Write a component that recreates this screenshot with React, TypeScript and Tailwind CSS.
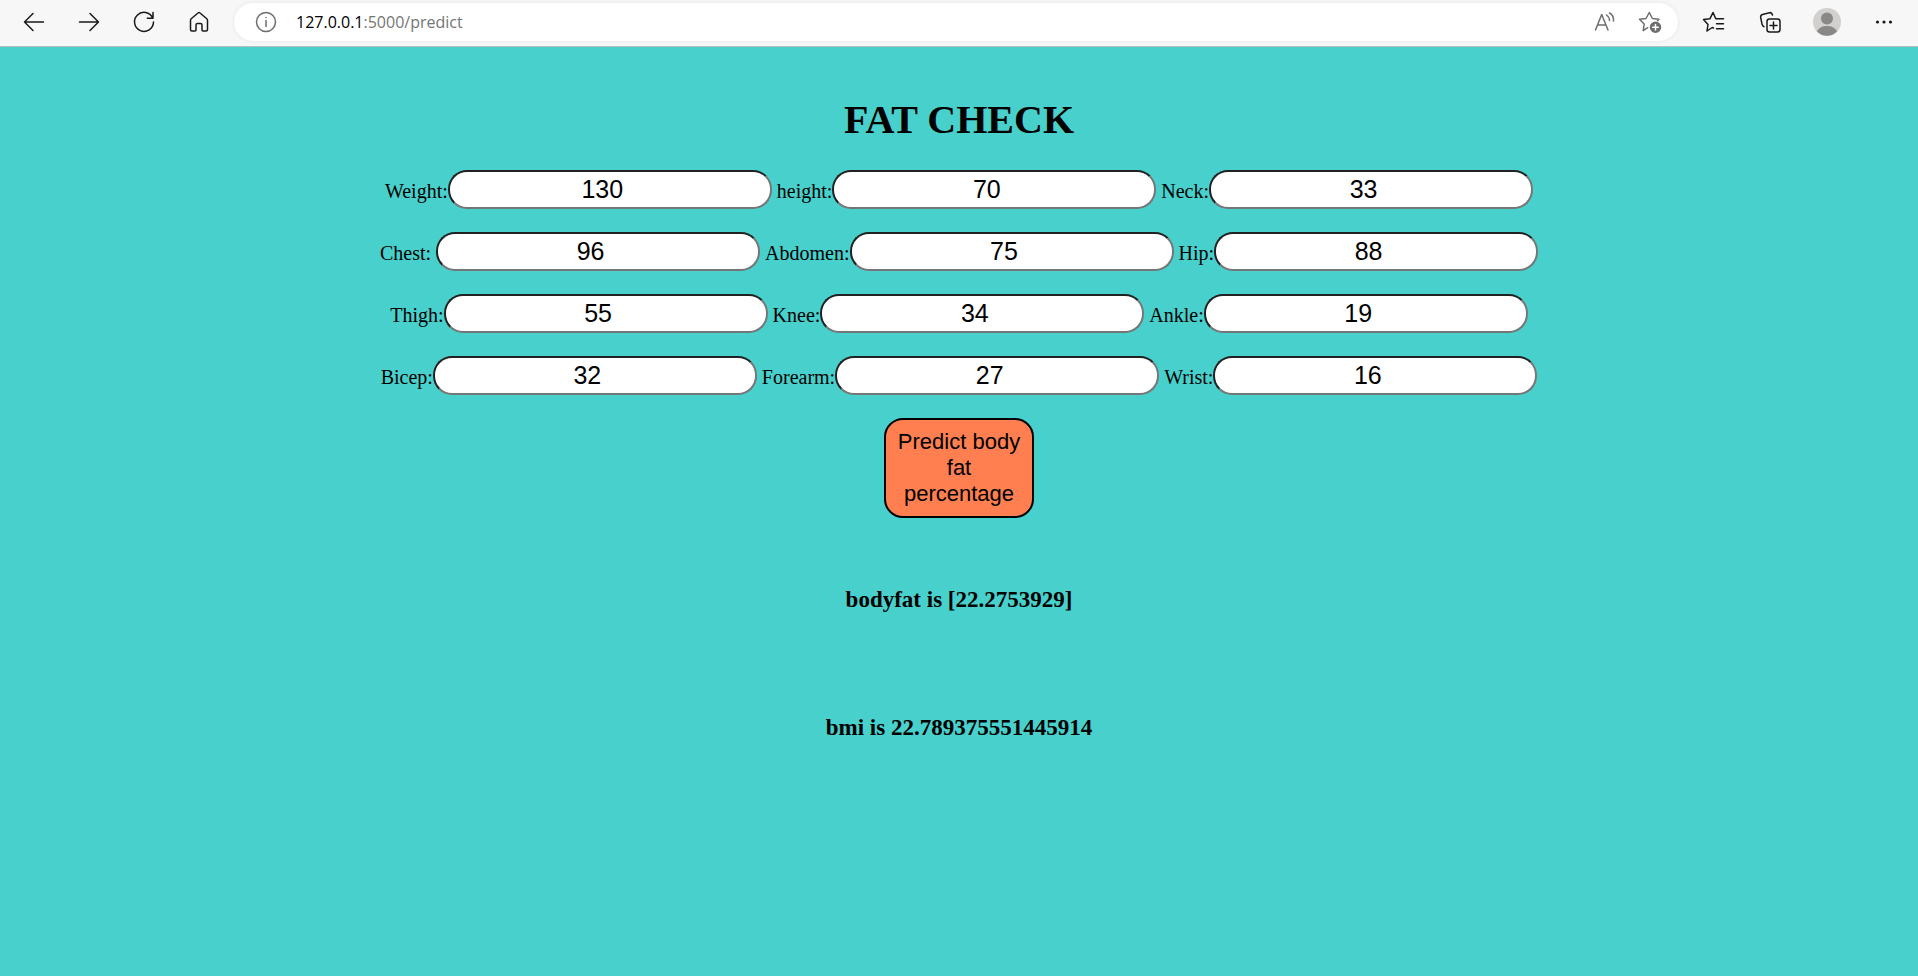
import React from "react";

type Field = { id: string; label: string; value: string; spaced?: boolean };

const rows: Field[][] = [
  [
    { id: "weight", label: "Weight:", value: "130" },
    { id: "height", label: "height:", value: "70" },
    { id: "neck", label: "Neck:", value: "33" },
  ],
  [
    { id: "chest", label: "Chest:", value: "96", spaced: true },
    { id: "abdomen", label: "Abdomen:", value: "75" },
    { id: "hip", label: "Hip:", value: "88" },
  ],
  [
    { id: "thigh", label: "Thigh:", value: "55" },
    { id: "knee", label: "Knee:", value: "34" },
    { id: "ankle", label: "Ankle:", value: "19" },
  ],
  [
    { id: "bicep", label: "Bicep:", value: "32" },
    { id: "forearm", label: "Forearm:", value: "27" },
    { id: "wrist", label: "Wrist:", value: "16" },
  ],
];

function Icon({ children }: { children: React.ReactNode }) {
  return (
    <svg
      viewBox="0 0 24 24"
      className="size-6"
      fill="none"
      stroke="currentColor"
      strokeWidth="1.5"
      strokeLinecap="round"
      strokeLinejoin="round"
      aria-hidden="true"
    >
      {children}
    </svg>
  );
}

function ToolButton({ label, wide, children }: { label: string; wide?: boolean; children: React.ReactNode }) {
  return (
    <button
      type="button"
      aria-label={label}
      className={`flex h-9 items-center justify-center text-[#1a1a1a] ${wide ? "w-[57px]" : "w-[55px]"}`}
    >
      {children}
    </button>
  );
}

function Toolbar() {
  return (
    <header className="flex h-[47px] items-center border-b border-[#b9bdbd] bg-[#f7f7f7] px-1.5 pb-0.5">
      <nav className="flex items-center">
        <ToolButton label="Back">
          <Icon><path d="M21.500 12H2.500M11 3.500L2.500 12L11 20.500" /></Icon>
        </ToolButton>
        <ToolButton label="Forward">
          <Icon><path d="M2.500 12H21.500M13 3.500L21.500 12L13 20.500" /></Icon>
        </ToolButton>
        <ToolButton label="Refresh">
          <Icon><path d="M20.700 8A9.500 9.500 0 1 0 21.500 12M21 2.500V8.200H15.300" /></Icon>
        </ToolButton>
        <ToolButton label="Home">
          <Icon><path d="M3.500 10.200V19.500a1.500 1.500 0 0 0 1.500 1.500h3a1 1 0 0 0 1-1v-5a1.500 1.500 0 0 1 1.500-1.500h3a1.500 1.500 0 0 1 1.500 1.500v5a1 1 0 0 0 1 1h3a1.500 1.500 0 0 0 1.500-1.500V10.200a2 2 0 0 0-.7-1.500L13 3a1.500 1.500 0 0 0-2 0L4.200 8.700a2 2 0 0 0-.7 1.500z" /></Icon>
        </ToolButton>
      </nav>
      <div className="ml-2 flex h-[38px] flex-1 items-center rounded-full bg-white pr-1.5 pl-5 text-[#6e6e6e] shadow-[0_0_4px_rgba(0,0,0,0.08)]">
        <Icon>
          <circle cx="12" cy="12" r="9.500" />
          <path d="M12 10.500V16.500M12 7.500V7.600" />
        </Icon>
        <p className="ml-[18px] flex-1 font-['Open_Sans',sans-serif] text-base text-[#757575]">
          <span className="text-black">127.0.0.1</span>:5000/predict
        </p>
        <button type="button" aria-label="Read aloud" className="flex w-[45px] justify-center">
          <Icon><path d="M2.500 20L8.700 4.500L15 20M4.700 15H12.700M13.500 5Q16.500 7 16.500 10.500M16.500 3Q21 5.500 20.500 11" /></Icon>
        </button>
        <button type="button" aria-label="Add to favorites" className="flex w-[45px] justify-center">
          <Icon>
            <path d="M9.700 17.700L5.200 20.700L6.200 14L1.500 9.200L8 8.500L11.300 2.500L14.400 8.500L21 9.200L19.500 10.700" />
            <circle cx="17.500" cy="17.200" r="5" fill="currentColor" />
            <path d="M17.500 14.500V20M14.700 17.200H20.200" stroke="white" />
          </Icon>
        </button>
      </div>
      <div className="ml-1.5 flex items-center">
        <ToolButton label="Favorites" wide>
          <Icon><path d="M12.500 18L11.200 17.500L6 21L7 14.500L2.500 9.500L9 8.700L12 2.500L14.800 8.700H22.500M15.500 13.700H22.500M15.500 18.700H22.500" /></Icon>
        </ToolButton>
        <ToolButton label="Collections" wide>
          <Icon>
            <rect x="9" y="9" width="13" height="13" rx="2.500" />
            <path d="M15.500 12V19M12 15.500H19M6 16.700Q4.500 16 4 14L2.700 7.500Q2.300 5.200 4.500 4.500L11.500 2.700Q13.700 2.200 14.500 5" />
          </Icon>
        </ToolButton>
        <ToolButton label="Profile" wide>
          <svg viewBox="0 0 28 28" className="size-7" aria-hidden="true">
            <circle cx="14" cy="14" r="14" fill="#d2d0ce" />
            <circle cx="14" cy="10.500" r="6" fill="#8a8886" />
            <path d="M4 23.500A10.500 8 0 0 1 24 23.500A14 14 0 0 1 4 23.500" fill="#8a8886" />
          </svg>
        </ToolButton>
        <ToolButton label="Settings and more" wide>
          <Icon>
            <g fill="currentColor" stroke="none">
              <circle cx="5.500" cy="12" r="1.600" />
              <circle cx="12" cy="12" r="1.600" />
              <circle cx="18.500" cy="12" r="1.600" />
            </g>
          </Icon>
        </ToolButton>
      </div>
    </header>
  );
}

export default function App() {
  return (
    <div className="flex min-h-screen flex-col bg-[#48d1cc] font-['Liberation_Serif',serif] text-black">
      <Toolbar />
      <main className="flex flex-col items-center pt-[50px]">
        <h1 className="text-[40px] leading-[46px] font-bold">FAT CHECK</h1>
        <form className="mt-[27px] flex flex-col items-center gap-[23px]" onSubmit={(e) => e.preventDefault()}>
          {rows.map((row) => (
            <div key={row[0].id} className="flex flex-wrap justify-center gap-x-[5px]">
              {row.map((f) => (
                <div key={f.id} className={`flex items-baseline ${f.spaced ? "gap-[5px]" : ""}`}>
                  <label htmlFor={f.id} className="text-xl">{f.label}</label>
                  <input
                    id={f.id}
                    type="number"
                    defaultValue={f.value}
                    className="h-[39px] w-[324px] rounded-[19px] border-2 border-t-[#212121] border-r-[#767676] border-b-[#767676] border-l-[#212121] bg-white text-center font-['Liberation_Sans',sans-serif] text-[25px] leading-7"
                  />
                </div>
              ))}
            </div>
          ))}
          <button
            type="submit"
            className="h-[100px] w-[150px] rounded-[19px] border-2 border-black bg-[#ff7f50] px-2 font-['Liberation_Sans',sans-serif] text-[22px] leading-[26px]"
          >
            Predict body fat percentage
          </button>
        </form>
        <h3 className="mt-[69px] text-[23px] leading-[26px] font-bold">bodyfat is [22.2753929]</h3>
        <h3 className="mt-[102px] text-[23px] leading-[26px] font-bold">bmi is 22.789375551445914</h3>
      </main>
    </div>
  );
}
